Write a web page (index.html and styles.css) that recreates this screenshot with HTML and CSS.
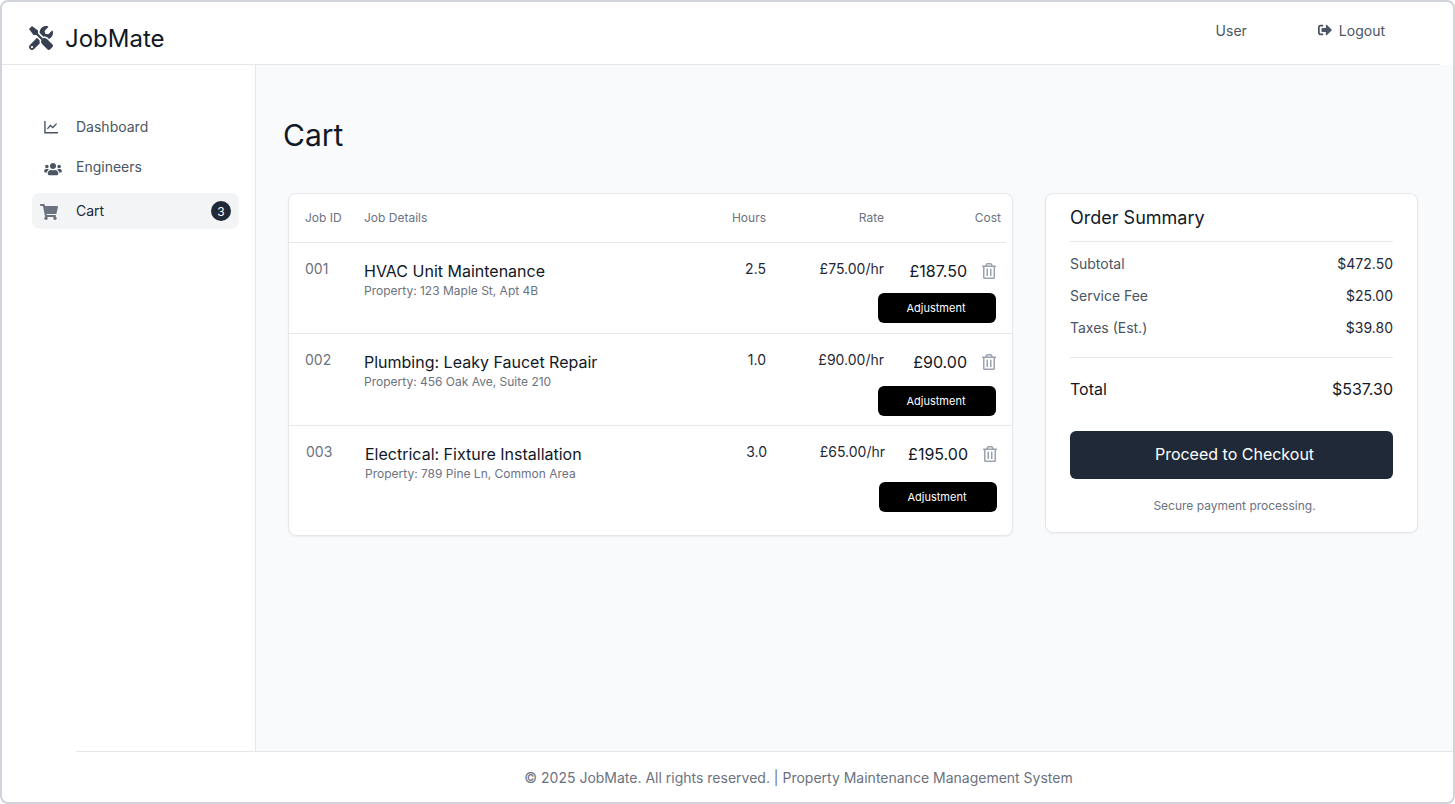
FILE: index.html
```html
<!DOCTYPE html>
<html lang="en">
  <head>
    <meta charset="UTF-8" />
    <meta name="viewport" content="width=device-width, initial-scale=1.0" />
    <title>JobMate - Cart</title>
    <link rel="stylesheet" href="styles.css">
  </head>
  <body>
    <div class="frame">
      <header class="topbar">
        <div class="brand">
          <svg class="brand-icon" viewBox="0 0 512 512"><path d="M501.1 395.7L384 278.6c-23.1-23.1-57.6-27.6-85.4-13.9L192 158.1V96L64 0 0 64l96 128h62.1l106.6 106.6c-13.6 27.8-9.2 62.3 13.9 85.4l117.1 117.1c14.6 14.6 38.2 14.6 52.7 0l52.7-52.7c14.5-14.6 14.5-38.2-.1-52.7zM331.7 225c28.3 0 54.9 11 74.9 31l19.4 19.4c15.8-6.9 30.8-16.5 43.8-29.5 37.1-37.1 49.7-89.3 37.9-136.7-2.2-9-13.5-12.1-20.1-5.5l-74.4 74.4-67.9-11.3L334 98.9l74.4-74.4c6.6-6.6 3.4-17.9-5.7-20.2-47.4-11.7-99.6.9-136.6 37.9-28.5 28.5-41.9 66.1-41.2 103.6l82.1 82.1c8.1-1.9 16.5-2.9 24.7-2.9zm-103.9 82l-56.7-56.7L18.7 402.8c-25 25-25 65.5 0 90.5s65.5 25 90.5 0l123.6-123.6c-7.6-19.9-9.9-41.6-5-62.7zM64 472c-13.2 0-24-10.8-24-24 0-13.3 10.7-24 24-24s24 10.7 24 24c0 13.2-10.7 24-24 24z"/></svg>
          <span class="brand-name">JobMate</span>
        </div>
        <nav class="top-links">
          <a class="top-link">User</a>
          <a class="top-link logout">
            <svg class="logout-icon" viewBox="0 0 512 512"><path d="M497 273L329 441c-15 15-41 4.5-41-17v-96H152c-13.3 0-24-10.7-24-24v-96c0-13.3 10.7-24 24-24h136V88c0-21.4 25.9-32 41-17l168 168c9.3 9.4 9.3 24.6 0 34zM192 436v-40c0-6.6-5.4-12-12-12H96c-17.7 0-32-14.3-32-32V160c0-17.7 14.3-32 32-32h84c6.6 0 12-5.4 12-12V76c0-6.6-5.4-12-12-12H96c-53 0-96 43-96 96v192c0 53 43 96 96 96h84c6.6 0 12-5.4 12-12z"/></svg>
            Logout
          </a>
        </nav>
      </header>

      <div class="middle">
        <aside class="sidebar">
          <a class="nav-item">
            <svg class="nav-icon icon-chart" viewBox="0 0 16 16"><path d="M1 1.5v12.7h14" /><path d="M3.6 10l3.2-3.6 2.6 2.2 4-4.2" /></svg>
            Dashboard
          </a>
          <a class="nav-item">
            <svg class="nav-icon icon-users" viewBox="0 0 640 512"><path d="M96 224c35.3 0 64-28.7 64-64s-28.7-64-64-64-64 28.7-64 64 28.7 64 64 64zm448 0c35.3 0 64-28.7 64-64s-28.7-64-64-64-64 28.7-64 64 28.7 64 64 64zm32 32h-64c-17.6 0-33.5 7.1-45.1 18.6 40.3 22.1 68.9 62 75.1 109.4h66c17.7 0 32-14.3 32-32v-32c0-35.3-28.7-64-64-64zm-256 0c61.9 0 112-50.1 112-112S381.9 32 320 32 208 82.1 208 144s50.1 112 112 112zm76.8 32h-8.3c-20.8 10-43.9 16-68.5 16s-47.6-6-68.5-16h-8.3C179.6 288 128 339.6 128 403.2V432c0 26.5 21.5 48 48 48h288c26.5 0 48-21.5 48-48v-28.8c0-63.6-51.6-115.2-115.2-115.2zm-223.7-13.4C161.5 263.1 145.6 256 128 256H64c-35.3 0-64 28.7-64 64v32c0 17.7 14.3 32 32 32h65.9c6.3-47.4 34.9-87.3 75.2-109.4z"/></svg>
            Engineers
          </a>
          <a class="nav-item active">
            <svg class="nav-icon icon-cart" viewBox="0 0 576 512"><path d="M528.12 301.319l47.273-208C578.806 78.301 567.391 64 551.99 64H159.208l-9.166-44.81C147.758 8.021 137.93 0 126.529 0H24C10.745 0 0 10.745 0 24v16c0 13.255 10.745 24 24 24h69.883l70.248 343.435C147.325 417.1 136 435.222 136 456c0 30.928 25.072 56 56 56s56-25.072 56-56c0-15.674-6.447-29.835-16.824-40h209.647C430.447 426.165 424 440.326 424 456c0 30.928 25.072 56 56 56s56-25.072 56-56c0-22.172-12.888-41.332-31.579-50.405l5.517-24.276c3.413-15.018-8.002-29.319-23.403-29.319H218.117l-6.545-32h293.145c11.206 0 20.92-7.754 23.403-18.681z"/></svg>
            Cart
            <span class="badge">3</span>
          </a>
        </aside>

        <main class="content">
          <h1 class="page-title">Cart</h1>
          <div class="columns">
            <section class="card jobs">
              <div class="jobs-head">
                <span>Job ID</span>
                <span>Job Details</span>
                <span class="num">Hours</span>
                <span class="num">Rate</span>
                <span class="num">Cost</span>
              </div>

              <div class="job-row">
                <span class="job-id">001</span>
                <div class="job-details">
                  <div class="job-name">HVAC Unit Maintenance</div>
                  <div class="job-place">Property: 123 Maple St, Apt 4B</div>
                </div>
                <span class="job-val">2.5</span>
                <span class="job-val">£75.00/hr</span>
                <div class="job-cost">
                  £187.50
                  <svg class="trash" viewBox="0 0 448 512"><path d="M268 416h24a12 12 0 0 0 12-12V188a12 12 0 0 0-12-12h-24a12 12 0 0 0-12 12v216a12 12 0 0 0 12 12zM432 80h-82.41l-34-56.7A48 48 0 0 0 274.41 0H173.59a48 48 0 0 0-41.16 23.3L98.41 80H16A16 16 0 0 0 0 96v16a16 16 0 0 0 16 16h16v336a48 48 0 0 0 48 48h288a48 48 0 0 0 48-48V128h16a16 16 0 0 0 16-16V96a16 16 0 0 0-16-16zM171.84 50.91A6 6 0 0 1 177 48h94a6 6 0 0 1 5.15 2.91L293.61 80H154.39zM368 464H80V128h288zm-212-48h24a12 12 0 0 0 12-12V188a12 12 0 0 0-12-12h-24a12 12 0 0 0-12 12v216a12 12 0 0 0 12 12z"/></svg>
                </div>
                <button class="adjust">Adjustment</button>
              </div>

              <div class="job-row row-two">
                <span class="job-id">002</span>
                <div class="job-details">
                  <div class="job-name">Plumbing: Leaky Faucet Repair</div>
                  <div class="job-place">Property: 456 Oak Ave, Suite 210</div>
                </div>
                <span class="job-val">1.0</span>
                <span class="job-val">£90.00/hr</span>
                <div class="job-cost">
                  £90.00
                  <svg class="trash" viewBox="0 0 448 512"><path d="M268 416h24a12 12 0 0 0 12-12V188a12 12 0 0 0-12-12h-24a12 12 0 0 0-12 12v216a12 12 0 0 0 12 12zM432 80h-82.41l-34-56.7A48 48 0 0 0 274.41 0H173.59a48 48 0 0 0-41.16 23.3L98.41 80H16A16 16 0 0 0 0 96v16a16 16 0 0 0 16 16h16v336a48 48 0 0 0 48 48h288a48 48 0 0 0 48-48V128h16a16 16 0 0 0 16-16V96a16 16 0 0 0-16-16zM171.84 50.91A6 6 0 0 1 177 48h94a6 6 0 0 1 5.15 2.91L293.61 80H154.39zM368 464H80V128h288zm-212-48h24a12 12 0 0 0 12-12V188a12 12 0 0 0-12-12h-24a12 12 0 0 0-12 12v216a12 12 0 0 0 12 12z"/></svg>
                </div>
                <button class="adjust">Adjustment</button>
              </div>

              <div class="job-row row-three">
                <span class="job-id">003</span>
                <div class="job-details">
                  <div class="job-name">Electrical: Fixture Installation</div>
                  <div class="job-place">Property: 789 Pine Ln, Common Area</div>
                </div>
                <span class="job-val">3.0</span>
                <span class="job-val">£65.00/hr</span>
                <div class="job-cost">
                  £195.00
                  <svg class="trash" viewBox="0 0 448 512"><path d="M268 416h24a12 12 0 0 0 12-12V188a12 12 0 0 0-12-12h-24a12 12 0 0 0-12 12v216a12 12 0 0 0 12 12zM432 80h-82.41l-34-56.7A48 48 0 0 0 274.41 0H173.59a48 48 0 0 0-41.16 23.3L98.41 80H16A16 16 0 0 0 0 96v16a16 16 0 0 0 16 16h16v336a48 48 0 0 0 48 48h288a48 48 0 0 0 48-48V128h16a16 16 0 0 0 16-16V96a16 16 0 0 0-16-16zM171.84 50.91A6 6 0 0 1 177 48h94a6 6 0 0 1 5.15 2.91L293.61 80H154.39zM368 464H80V128h288zm-212-48h24a12 12 0 0 0 12-12V188a12 12 0 0 0-12-12h-24a12 12 0 0 0-12 12v216a12 12 0 0 0 12 12z"/></svg>
                </div>
                <button class="adjust">Adjustment</button>
              </div>
            </section>

            <section class="card summary">
              <h2 class="summary-title">Order Summary</h2>
              <div class="summary-lines">
                <div class="summary-line"><span>Subtotal</span><span class="amount">$472.50</span></div>
                <div class="summary-line"><span>Service Fee</span><span class="amount">$25.00</span></div>
                <div class="summary-line"><span>Taxes (Est.)</span><span class="amount">$39.80</span></div>
              </div>
              <div class="summary-total"><span>Total</span><span>$537.30</span></div>
              <button class="checkout">Proceed to Checkout</button>
              <p class="secure">Secure payment processing.</p>
            </section>
          </div>
        </main>
      </div>

      <footer class="footer">
        <div class="footer-inner">© 2025 JobMate. All rights reserved. | Property Maintenance Management System</div>
      </footer>
    </div>
  </body>
</html>
```

FILE: styles.css
```css
* {
  box-sizing: border-box;
}

body {
  margin: 0;
  font-family: Inter, "Liberation Sans", sans-serif;
  color: #111827;
  background: #ffffff;
}

.frame {
  display: flex;
  flex-direction: column;
  height: 804px;
  border: 2px solid #d1d5db;
  border-radius: 8px;
  overflow: hidden;
  background: #ffffff;
}

/* top bar */
.topbar {
  display: flex;
  justify-content: space-between;
  flex: none;
  width: 1438px;
  height: 63px;
  padding: 0 55px 0 27px;
  border-bottom: 1px solid #e5e7eb;
}

.brand {
  display: flex;
  align-items: center;
  gap: 12px;
  height: 24px;
  margin-top: 24px;
}

.brand-icon {
  width: 24px;
  height: 24px;
  fill: #374151;
}

.brand-name {
  margin-top: 2px;
  font-size: 24px;
  line-height: 32px;
  color: #111827;
}

.top-links {
  display: flex;
  gap: 71px;
  margin-top: 18px;
}

.top-link {
  display: flex;
  align-items: center;
  gap: 7px;
  height: 20px;
  font-size: 14px;
  color: #4b5563;
}

.logout-icon {
  width: 14px;
  height: 14px;
  fill: #4b5563;
}

/* sidebar + main */
.middle {
  display: flex;
  flex: 1;
  min-height: 0;
}

.sidebar {
  display: flex;
  flex-direction: column;
  flex: none;
  width: 254px;
  padding: 44px 16px 0 30px;
  border-right: 1px solid #e5e7eb;
}

.nav-item {
  position: relative;
  display: flex;
  align-items: center;
  height: 36px;
  margin-bottom: 4px;
  padding: 0 0 2px 44px;
  font-size: 14px;
  color: #4b5563;
}

.nav-item.active {
  margin-top: 4px;
  border-radius: 8px;
  background: #f3f4f6;
  color: #1f2937;
}

.nav-icon {
  position: absolute;
  top: 50%;
  transform: translateY(-50%);
  fill: #4b5563;
}

.icon-chart {
  left: 12px;
  width: 15px;
  height: 15px;
  fill: none;
  stroke: #4b5563;
  stroke-width: 1.5;
}

.icon-users {
  left: 12px;
  width: 18px;
  height: 14px;
  margin-top: 2px;
}

.icon-cart {
  left: 8px;
  width: 18px;
  height: 16px;
  margin-top: 1px;
  fill: #6b7280;
}

.badge {
  display: flex;
  align-items: center;
  justify-content: center;
  width: 20px;
  height: 20px;
  margin: 2px 8px 0 auto;
  border-radius: 50%;
  background: #1f2937;
  color: #ffffff;
  font-size: 12px;
}

.content {
  flex: 1;
  min-width: 0;
  background: #f9fafb;
}

.page-title {
  margin: 52px 0 40px 27px;
  font-size: 30px;
  line-height: 36px;
  font-weight: 400;
  color: #111827;
}

.columns {
  display: flex;
  align-items: flex-start;
  gap: 32px;
  padding-left: 32px;
}

.card {
  border: 1px solid #e5e7eb;
  border-radius: 8px;
  background: #ffffff;
  box-shadow: 0 1px 2px rgba(0, 0, 0, 0.05);
}

/* jobs table */
.jobs {
  width: 725px;
  height: 343px;
}

.jobs-head,
.job-row {
  display: grid;
}

.jobs-head {
  grid-template-columns: 59px 342px 60px 118px 117px;
  align-items: center;
  width: 717px;
  height: 49px;
  padding: 0 5px 2px 16px;
  border-bottom: 1px solid #e5e7eb;
  font-size: 12px;
  color: #6b7280;
}

.num {
  text-align: right;
}

.job-row {
  grid-template-columns: 59px 1fr 60px 118px 112px;
  grid-template-rows: 34px auto;
  padding: 16px 16px 10px;
  border-bottom: 1px solid #e5e7eb;
}

.row-two {
  grid-template-rows: 36px auto;
  padding-bottom: 9px;
}

.row-three {
  grid-template-rows: 40px auto;
  padding: 16px 15px 0 17px;
  border-bottom: none;
}

.job-id {
  font-size: 14px;
  line-height: 20px;
  color: #6b7280;
}

.job-details {
  grid-row: span 2;
}

.job-name {
  font-size: 16px;
  line-height: 24px;
  color: #111827;
}

.job-place {
  font-size: 12px;
  line-height: 16px;
  color: #6b7280;
}

.job-val {
  font-size: 14px;
  line-height: 20px;
  text-align: right;
  color: #1f2937;
}

.job-cost {
  display: flex;
  align-items: center;
  justify-content: flex-end;
  gap: 15px;
  height: 24px;
  font-size: 16px;
  color: #111827;
}

.trash {
  width: 14px;
  height: 16px;
  fill: #9ca3af;
}

.adjust {
  grid-column: 3 / 6;
  justify-self: end;
  width: 118px;
  height: 30px;
  padding: 0 2px 0 0;
  border: none;
  border-radius: 6px;
  background: #000000;
  color: #ffffff;
  font-family: inherit;
  font-size: 11px;
}

/* order summary */
.summary {
  width: 373px;
  padding: 10px 24px 18px;
}

.summary-title {
  margin: 0;
  padding-bottom: 9px;
  border-bottom: 1px solid #e5e7eb;
  font-size: 18px;
  line-height: 28px;
  font-weight: 400;
  color: #111827;
}

.summary-lines {
  display: flex;
  flex-direction: column;
  gap: 12px;
  padding: 12px 0 19px;
  border-bottom: 1px solid #e5e7eb;
}

.summary-line,
.summary-total {
  display: flex;
  justify-content: space-between;
}

.summary-line {
  font-size: 14px;
  line-height: 20px;
  color: #4b5563;
}

.amount {
  color: #1f2937;
}

.summary-total {
  margin-top: 19px;
  font-size: 16px;
  line-height: 24px;
  color: #111827;
}

.checkout {
  display: block;
  width: 100%;
  height: 48px;
  margin-top: 30px;
  padding: 0 0 2px 6px;
  border: none;
  border-radius: 6px;
  background: #1f2937;
  color: #ffffff;
  font-family: inherit;
  font-size: 16px;
}

.secure {
  margin: 19px 0 0;
  padding-left: 6px;
  font-size: 12px;
  line-height: 16px;
  text-align: center;
  color: #6b7280;
}

/* footer */
.footer {
  flex: none;
  height: 51px;
  padding-left: 74px;
}

.footer-inner {
  height: 100%;
  padding: 16px 0 0 68px;
  border-top: 1px solid #e5e7eb;
  font-size: 14px;
  line-height: 20px;
  text-align: center;
  color: #6b7280;
}
```
